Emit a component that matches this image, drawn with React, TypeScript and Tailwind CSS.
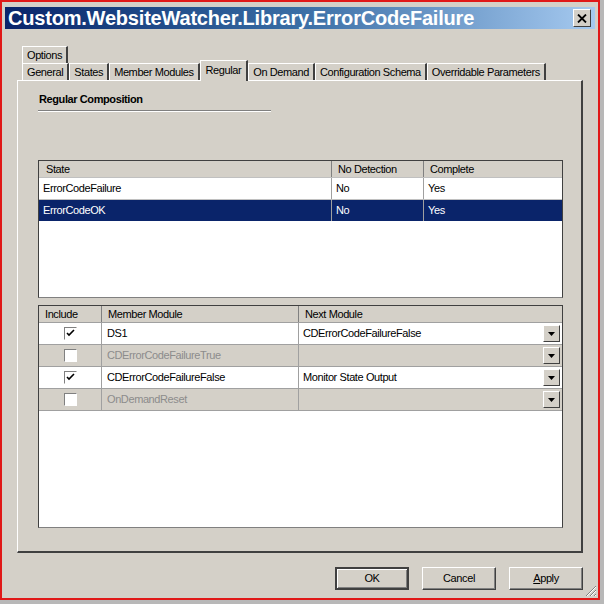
import React from 'react';

const FONT = { fontFamily: '"Liberation Sans", Arial, sans-serif' };

function Tab({ label, selected }: { label: string; selected?: boolean }) {
  if (selected) {
    return (
      <div className="relative z-10 -mb-px -mt-[3px] flex h-[21px] items-center border-l border-t border-r-2 border-l-white border-t-white border-r-[#404040] bg-[#d4d0c8] px-[5px] pb-[2px]">
        {label}
      </div>
    );
  }
  return (
    <div className="flex h-[17px] items-center border-l border-t border-r-2 border-l-white border-t-white border-r-[#404040] bg-[#d4d0c8] px-[4px]">
      {label}
    </div>
  );
}

function Checkbox({ checked }: { checked: boolean }) {
  return (
    <div className="flex h-[13px] w-[13px] items-center justify-center border border-l-[#808080] border-t-[#808080] border-r-white border-b-white bg-white">
      {checked && (
        <svg width="9" height="9" viewBox="0 0 9 9">
          <path d="M1 4 L3 6 L8 1" stroke="#000" strokeWidth="1.6" fill="none" />
        </svg>
      )}
    </div>
  );
}

function DropButton() {
  return (
    <div className="flex h-[17px] w-[17px] items-center justify-center border border-l-white border-t-white border-r-[#404040] border-b-[#404040] bg-[#d4d0c8]">
      <svg width="7" height="4" viewBox="0 0 7 4">
        <path d="M0 0 H7 L3.5 4 Z" fill="#000" />
      </svg>
    </div>
  );
}

function Button({ label, isDefault }: { label: React.ReactNode; isDefault?: boolean }) {
  return (
    <div
      className={`flex h-[23px] w-[74px] items-center justify-center bg-[#d4d0c8] ${
        isDefault
          ? 'border-2 border-[#404040] shadow-[inset_1px_1px_0_#fff,inset_-1px_-1px_0_#808080]'
          : 'border border-l-white border-t-white border-r-[#404040] border-b-[#404040] shadow-[inset_-1px_-1px_0_#808080]'
      }`}
    >
      {label}
    </div>
  );
}

const states = [
  { name: 'ErrorCodeFailure', noDet: 'No', complete: 'Yes', selected: false },
  { name: 'ErrorCodeOK', noDet: 'No', complete: 'Yes', selected: true },
];

const modules = [
  { include: true, name: 'DS1', next: 'CDErrorCodeFailureFalse', enabled: true },
  { include: false, name: 'CDErrorCodeFailureTrue', next: '', enabled: false },
  { include: true, name: 'CDErrorCodeFailureFalse', next: 'Monitor State Output', enabled: true },
  { include: false, name: 'OnDemandReset', next: '', enabled: false },
];

export default function App() {
  return (
    <div className="h-[604px] w-[604px] bg-[#b8b8b8] text-[11px] tracking-[-0.4px] text-black" style={FONT}>
      <div className="flex h-[600px] w-[600px] flex-col border-2 border-[#e01818] bg-[#d4d0c8]">
        {/* Title bar */}
        <div className="mx-[3px] mt-[5px] flex h-[22px] items-center bg-gradient-to-r from-[#0a246a] via-[#3a6ea5] to-[#a6caf0] pl-[3px] pr-[4px]">
          <span className="flex-1 text-[20px] font-bold leading-none tracking-[-0.2px] text-white">
            Custom.WebsiteWatcher.Library.ErrorCodeFailure
          </span>
          <div className="flex h-[18px] w-[18px] items-center justify-center border border-l-white border-t-white border-r-[#404040] border-b-[#404040] bg-[#d4d0c8]">
            <svg width="10" height="9" viewBox="0 0 10 9">
              <path d="M1 0.5 L9 8.5 M9 0.5 L1 8.5" stroke="#000" strokeWidth="1.8" />
            </svg>
          </div>
        </div>

        {/* Tabs */}
        <div className="ml-[15px] mt-[17px] flex w-[566px] flex-col">
          <div className="ml-[5px] flex">
            <Tab label="Options" />
          </div>
          <div className="ml-[5px] flex h-[17px] items-end">
            <Tab label="General" />
            <Tab label="States" />
            <Tab label="Member Modules" />
            <Tab label="Regular" selected />
            <Tab label="On Demand" />
            <Tab label="Configuration Schema" />
            <Tab label="Overridable Parameters" />
          </div>

          {/* Panel */}
          <div className="flex h-[473px] flex-col border border-b-2 border-r-2 border-l-white border-t-white border-r-[#404040] border-b-[#404040] bg-[#d4d0c8] pl-[20px] pr-[18px]">
            <div className="mt-[12px] pl-[1px] font-bold leading-[13px]">Regular Composition</div>
            <div className="mt-[4px] h-[2px] w-[233px] border-t border-b border-t-[#808080] border-b-white" />

            {/* States table */}
            <div className="mt-[48px] flex h-[138px] flex-col border border-l-[#404040] border-t-[#404040] border-r-[#404040] border-b-[#808080] bg-white">
              <div className="grid h-[16px] grid-cols-[293px_92px_1fr] bg-[#d4d0c8]">
                <div className="border-r border-[#808080] pl-[7px] leading-[16px]">State</div>
                <div className="border-r border-[#808080] pl-[6px] leading-[16px]">No Detection</div>
                <div className="pl-[6px] leading-[16px]">Complete</div>
              </div>
              {states.map(s => (
                <div
                  key={s.name}
                  className={`grid h-[22px] grid-cols-[293px_92px_1fr] border-t border-[#c0c0c0] ${
                    s.selected ? 'bg-[#0a246a] text-white' : 'bg-white'
                  }`}
                >
                  <div className="border-r border-[#a0a0a0] pl-[4px] leading-[21px]">{s.name}</div>
                  <div className="border-r border-[#a0a0a0] pl-[4px] leading-[21px]">{s.noDet}</div>
                  <div className="pl-[4px] leading-[21px]">{s.complete}</div>
                </div>
              ))}
            </div>

            {/* Modules table */}
            <div className="mt-[7px] flex h-[223px] flex-col border border-l-[#404040] border-t-[#404040] border-r-[#404040] border-b-[#808080] bg-white">
              <div className="grid h-[16px] grid-cols-[63px_197px_1fr] bg-[#d4d0c8]">
                <div className="border-r border-[#808080] pl-[6px] leading-[16px]">Include</div>
                <div className="border-r border-[#808080] pl-[6px] leading-[16px]">Member Module</div>
                <div className="pl-[6px] leading-[16px]">Next Module</div>
              </div>
              {modules.map(m => (
                <div
                  key={m.name}
                  className={`grid h-[22px] grid-cols-[63px_197px_1fr] border-t border-[#a0a0a0] ${
                    m.enabled ? 'bg-white' : 'bg-[#d4d0c8] text-[#8c8c8c]'
                  }`}
                >
                  <div className="flex items-center justify-center border-r border-[#a0a0a0]">
                    <Checkbox checked={m.include} />
                  </div>
                  <div className="border-r border-[#a0a0a0] pl-[5px] leading-[21px]">{m.name}</div>
                  <div className="flex items-center pl-[4px] pr-[2px] text-black">
                    <span className="flex-1">{m.next}</span>
                    <DropButton />
                  </div>
                </div>
              ))}
              <div className="flex-1 border-t border-[#a0a0a0] bg-white" />
            </div>
          </div>
        </div>

        {/* Buttons */}
        <div className="mr-[15px] mt-[14px] flex justify-end gap-[13px]">
          <Button label="OK" isDefault />
          <Button label="Cancel" />
          <Button
            label={
              <span>
                <span className="underline">A</span>pply
              </span>
            }
          />
        </div>
        <div className="relative flex-1">
          <svg className="absolute bottom-[1px] right-[1px]" width="12" height="12" viewBox="0 0 12 12">
            <path d="M11 1 L1 11 M11 5 L5 11 M11 9 L9 11" stroke="#808080" strokeWidth="1" />
            <path d="M11 2 L2 11 M11 6 L6 11 M11 10 L10 11" stroke="#fff" strokeWidth="1" />
          </svg>
        </div>
      </div>
    </div>
  );
}
